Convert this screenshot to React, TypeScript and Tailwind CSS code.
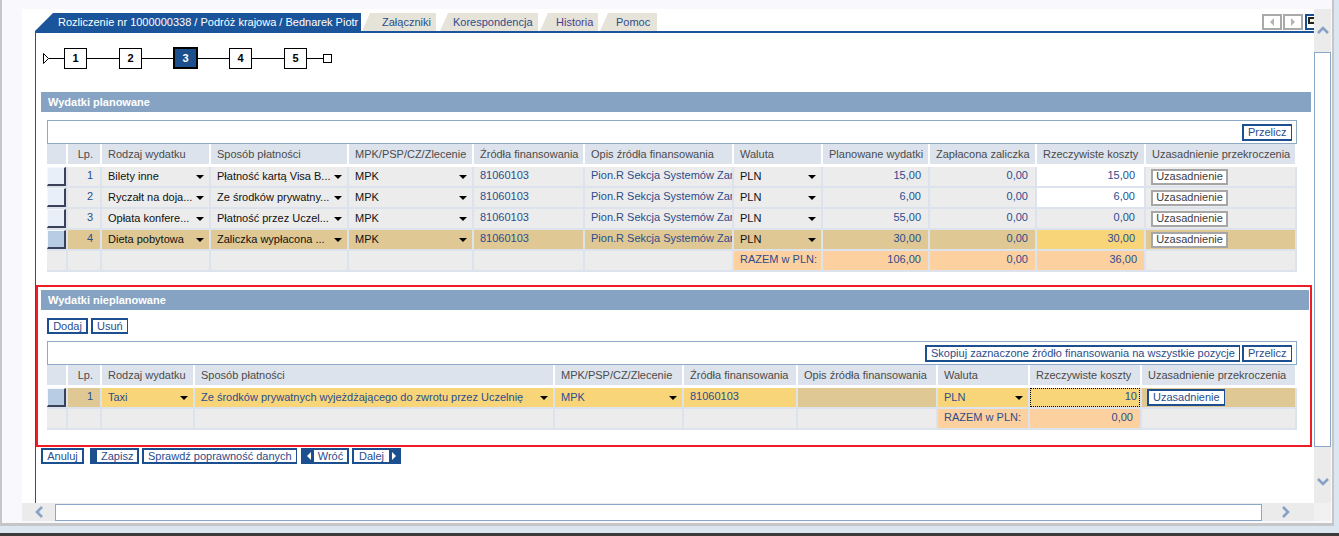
import React from 'react'

const FONT = "font-['Liberation_Sans',Arial,sans-serif]"

const PLANNED_W = ['w-[21px]', 'w-[34px]', 'w-[109px]', 'w-[138px]', 'w-[125px]', 'w-[111px]', 'w-[149px]', 'w-[89px]', 'w-[107px]', 'w-[107px]', 'w-[109px]', 'w-[151px]']
const UNPLANNED_W = ['w-[21px]', 'w-[34px]', 'w-[93px]', 'w-[360px]', 'w-[129px]', 'w-[114px]', 'w-[140px]', 'w-[92px]', 'w-[112px]', 'w-[155px]']

const GRAY = 'bg-[#ececec]'
const TAN = 'bg-[#e0c894]'
const YELLOW = 'bg-[#f9d57a]'
const PEACH = 'bg-[#fdd09f]'

// small black select arrow
function Arrow() {
  return <span className="block w-0 h-0 shrink-0 border-x-[4px] border-x-transparent border-t-[4px] border-t-black" />
}

function Cell({ w, bg = GRAY, className = '', children }: { w: string; bg?: string; className?: string; children?: React.ReactNode }) {
  return (
    <div className={`${w} ${bg} shrink-0 h-full border-r-2 border-[#dde3ec] overflow-hidden whitespace-nowrap flex items-center ${className}`}>
      {children}
    </div>
  )
}

function Txt({ w, bg, text, right }: { w: string; bg?: string; text: string; right?: boolean }) {
  return (
    <Cell w={w} bg={bg} className={`px-[6px] pb-[2px] text-[#2b4d8c] ${right ? 'justify-end pr-[7px]' : ''}`}>
      {text}
    </Cell>
  )
}

function Sel({ w, bg, text, blue }: { w: string; bg?: string; text: string; blue?: boolean }) {
  return (
    <Cell w={w} bg={bg} className={`pl-[6px] pr-[5px] justify-between ${blue ? 'text-[#2b4d8c]' : 'text-[#111]'}`}>
      <span>{text}</span>
      <Arrow />
    </Cell>
  )
}

function Check({ selected, empty }: { selected?: boolean; empty?: boolean }) {
  return (
    <Cell w="w-[21px]" bg={GRAY} className="items-stretch">
      {!empty && (
        <div
          className={`flex-1 border-l border-t border-[#f4f7fb] border-r-2 border-b-2 border-r-[#3b4158] border-b-[#3b4158] ${
            selected ? 'bg-[#b8cce4]' : 'bg-[#e9eff8]'
          }`}
        />
      )}
    </Cell>
  )
}

function Btn({ children, className = '', h = 'h-[17px]' }: { children: React.ReactNode; className?: string; h?: string }) {
  return (
    <div className={`${h} bg-[#1b4f8f] p-[2px] flex shrink-0 ${className}`}>
      <div className="flex-1 bg-white flex items-center justify-center px-[4px] text-[#2b4d8c] whitespace-nowrap">{children}</div>
    </div>
  )
}

function GrayBtn() {
  return (
    <div className="ml-[5px] h-[16px] w-[77px] border-2 border-[#a6a6a6] bg-white flex items-center justify-center text-[#3c3c3c]">
      Uzasadnienie
    </div>
  )
}

function Header({ widths, labels }: { widths: string[]; labels: string[] }) {
  return (
    <div className="flex h-[20px] bg-[#dde3ec] mb-[3px] text-[#4b4b4b]">
      {labels.map((l, i) => (
        <div
          key={i}
          className={`${widths[i]} shrink-0 h-full border-r-2 border-white flex items-center whitespace-nowrap overflow-hidden ${
            l === 'Lp.' ? 'justify-end pr-[7px]' : 'pl-[6px]'
          }`}
        >
          {l}
        </div>
      ))}
    </div>
  )
}

function Row({ children }: { children: React.ReactNode }) {
  return <div className="flex h-[21px] border-b-2 border-[#dde3ec]">{children}</div>
}

function Toolbar({ children }: { children?: React.ReactNode }) {
  return <div className="h-[24px] border border-[#8ea9c8] flex items-center justify-end gap-[2px] pr-[4px]">{children}</div>
}

function SectionHeader({ title, className = '' }: { title: string; className?: string }) {
  return (
    <div className={`h-[20px] bg-[#86a3c3] text-white font-bold pl-[7px] flex items-center shrink-0 ${className}`}>{title}</div>
  )
}

const plannedRows = [
  { lp: '1', rodzaj: 'Bilety inne', sposob: 'Płatność kartą Visa B...', plan: '15,00', rz: '15,00', rzBg: 'bg-white' },
  { lp: '2', rodzaj: 'Ryczałt na doja...', sposob: 'Ze środków prywatny...', plan: '6,00', rz: '6,00', rzBg: 'bg-white' },
  { lp: '3', rodzaj: 'Opłata konfere...', sposob: 'Płatność przez Uczel...', plan: '55,00', rz: '0,00', rzBg: GRAY },
  { lp: '4', rodzaj: 'Dieta pobytowa', sposob: 'Zaliczka wypłacona ...', plan: '30,00', rz: '30,00', rzBg: YELLOW, sel: true },
]

function PlannedTable() {
  const w = PLANNED_W
  return (
    <div className="ml-[11px] mt-[8px] w-[1250px]">
      <Toolbar>
        <Btn className="w-[50px]">Przelicz</Btn>
      </Toolbar>
      <Header
        widths={w}
        labels={['', 'Lp.', 'Rodzaj wydatku', 'Sposób płatności', 'MPK/PSP/CZ/Zlecenie', 'Źródła finansowania', 'Opis źródła finansowania', 'Waluta', 'Planowane wydatki', 'Zapłacona zaliczka', 'Rzeczywiste koszty', 'Uzasadnienie przekroczenia']}
      />
      {plannedRows.map((r) => {
        const bg = r.sel ? TAN : GRAY
        return (
          <Row key={r.lp}>
            <Check selected={r.sel} />
            <Txt w={w[1]} bg={bg} text={r.lp} right />
            <Sel w={w[2]} bg={bg} text={r.rodzaj} />
            <Sel w={w[3]} bg={bg} text={r.sposob} />
            <Sel w={w[4]} bg={bg} text="MPK" />
            <Txt w={w[5]} bg={bg} text="81060103" />
            <Txt w={w[6]} bg={bg} text="Pion.R Sekcja Systemów Zar" />
            <Sel w={w[7]} bg={bg} text="PLN" />
            <Txt w={w[8]} bg={bg} text={r.plan} right />
            <Txt w={w[9]} bg={bg} text="0,00" right />
            <Cell w={w[10]} bg={r.rzBg} className="justify-end pr-[9px] pb-[2px] text-[#2b4d8c]">
              {r.rz}
            </Cell>
            <Cell w={w[11]} bg={bg}>
              <GrayBtn />
            </Cell>
          </Row>
        )
      })}
      <Row>
        <Check empty />
        <Cell w={w[1]} />
        <Cell w={w[2]} />
        <Cell w={w[3]} />
        <Cell w={w[4]} />
        <Cell w={w[5]} />
        <Cell w={w[6]} />
        <Txt w={w[7]} bg={PEACH} text="RAZEM w PLN:" />
        <Txt w={w[8]} bg={PEACH} text="106,00" right />
        <Txt w={w[9]} bg={PEACH} text="0,00" right />
        <Txt w={w[10]} bg={PEACH} text="36,00" right />
        <Cell w={w[11]} />
      </Row>
    </div>
  )
}

function UnplannedTable() {
  const w = UNPLANNED_W
  return (
    <div className="ml-[6px] mt-[7px] w-[1250px]">
      <Toolbar>
        <Btn className="w-[315px]">Skopiuj zaznaczone źródło finansowania na wszystkie pozycje</Btn>
        <Btn className="w-[50px]">Przelicz</Btn>
      </Toolbar>
      <Header
        widths={w}
        labels={['', 'Lp.', 'Rodzaj wydatku', 'Sposób płatności', 'MPK/PSP/CZ/Zlecenie', 'Źródła finansowania', 'Opis źródła finansowania', 'Waluta', 'Rzeczywiste koszty', 'Uzasadnienie przekroczenia']}
      />
      <Row>
        <Check selected />
        <Txt w={w[1]} bg={TAN} text="1" right />
        <Sel w={w[2]} bg={YELLOW} text="Taxi" blue />
        <Sel w={w[3]} bg={YELLOW} text="Ze środków prywatnych wyjeżdżającego do zwrotu przez Uczelnię" blue />
        <Sel w={w[4]} bg={YELLOW} text="MPK" blue />
        <Txt w={w[5]} bg={YELLOW} text="81060103" />
        <Cell w={w[6]} bg={TAN} />
        <Sel w={w[7]} bg={YELLOW} text="PLN" blue />
        <Cell w={w[8]} bg={YELLOW} className="items-stretch">
          <div className="flex-1 border border-dotted border-black flex items-center justify-end pr-[2px] pb-[2px] text-[#2b4d8c]">10</div>
        </Cell>
        <Cell w={w[9]} bg={TAN}>
          <Btn className="ml-[5px] w-[78px]">Uzasadnienie</Btn>
        </Cell>
      </Row>
      <Row>
        <Check empty />
        <Cell w={w[1]} />
        <Cell w={w[2]} />
        <Cell w={w[3]} />
        <Cell w={w[4]} />
        <Cell w={w[5]} />
        <Cell w={w[6]} />
        <Txt w={w[7]} bg={PEACH} text="RAZEM w PLN:" />
        <Txt w={w[8]} bg={PEACH} text="0,00" right />
        <Cell w={w[9]} />
      </Row>
    </div>
  )
}

function StepBox({ n, active }: { n: number; active?: boolean }) {
  return active ? (
    <div className="w-[25px] h-[22px] border-2 border-black bg-[#1b4f8e] text-white font-bold flex items-center justify-center shrink-0">{n}</div>
  ) : (
    <div className="w-[23px] h-[21px] border border-black bg-white text-black font-bold flex items-center justify-center shrink-0">{n}</div>
  )
}

function Line({ w }: { w: string }) {
  return <div className={`${w} h-px bg-black shrink-0`} />
}

function Stepper() {
  return (
    <div className="ml-[7px] mt-[14px] h-[22px] flex items-center">
      <svg width="6" height="11" viewBox="0 0 6 11" className="shrink-0">
        <polygon points="0.5,0.5 5.5,5.5 0.5,10.5" fill="white" stroke="black" strokeWidth="1" />
      </svg>
      <Line w="w-[15px]" />
      <StepBox n={1} />
      <Line w="w-[32px]" />
      <StepBox n={2} />
      <Line w="w-[31px]" />
      <StepBox n={3} active />
      <Line w="w-[31px]" />
      <StepBox n={4} />
      <Line w="w-[32px]" />
      <StepBox n={5} />
      <Line w="w-[16px]" />
      <div className="w-[9px] h-[9px] border border-black bg-white shrink-0" />
    </div>
  )
}

function Tabs() {
  const tab = 'h-[18px] bg-[#e6e4d9] text-[#2b4d8c] flex items-center shrink-0 [clip-path:polygon(8px_0,100%_0,100%_100%,0_100%)]'
  return (
    <div className="w-[1290px] h-[20px] border-b-2 border-[#1a559b] flex items-end">
      <div className="w-[326px] h-[18px] bg-[#1a559b] text-white pl-[23px] flex items-center shrink-0 [clip-path:polygon(18px_0,100%_0,100%_100%,0_100%)]">
        Rozliczenie nr 1000000338 / Podróż krajowa / Bednarek Piotr
      </div>
      <div className={`${tab} ml-[1px] w-[74px] pl-[20px]`}>Załączniki</div>
      <div className={`${tab} ml-[4px] w-[98px] pl-[13px]`}>Korespondencja</div>
      <div className={`${tab} ml-[2px] w-[58px] pl-[16px] text-[#4a3f8c]`}>Historia</div>
      <div className={`${tab} ml-[2px] w-[57px] pl-[16px]`}>Pomoc</div>
      <div className="ml-auto self-start mt-[1px] flex gap-[1px]">
        <div className="w-[20px] h-[16px] border-2 border-[#a9a9a9] bg-white flex items-center justify-center">
          <span className="block w-0 h-0 border-y-[4px] border-y-transparent border-r-[4px] border-r-[#b4b4b4]" />
        </div>
        <div className="w-[20px] h-[16px] border-2 border-[#a9a9a9] bg-white flex items-center justify-center">
          <span className="block w-0 h-0 border-y-[4px] border-y-transparent border-l-[4px] border-l-[#b4b4b4]" />
        </div>
        <div className="ml-[1px] w-[20px] h-[16px] border-2 border-[#1b4f8f] bg-white pl-[1px] pt-[1px]">
          <div className="w-[10px] h-[7px] border-2 border-[#222] bg-[#f1f0d6]" />
        </div>
      </div>
    </div>
  )
}

function Chevron({ dir }: { dir: 'up' | 'down' | 'left' | 'right' }) {
  const pts = {
    up: '1,8 6,3 11,8',
    down: '1,3 6,8 11,3',
    left: '8,1 3,6 8,11',
    right: '3,1 8,6 3,11',
  }[dir]
  return (
    <svg width="12" height="12" viewBox="0 0 12 12" className="shrink-0">
      <polyline points={pts} fill="none" stroke="#87a2c4" strokeWidth="2.6" />
    </svg>
  )
}

function VScroll() {
  return (
    <div className="w-[17px] h-full bg-[#ebebeb] flex flex-col items-center shrink-0">
      <div className="h-[43px] flex items-start pt-[16px]">
        <Chevron dir="up" />
      </div>
      <div className="w-[17px] h-[395px] border border-[#8aa6c8] bg-white" />
      <div className="flex-1 flex items-start pt-[29px]">
        <Chevron dir="down" />
      </div>
    </div>
  )
}

function HScroll() {
  return (
    <div className="h-[18px] flex shrink-0">
      <div className="w-[1292px] bg-[#ebebeb] flex items-center">
        <div className="w-[33px] flex justify-center pl-[2px]">
          <Chevron dir="left" />
        </div>
        <div className="w-[1207px] h-[17px] self-end border border-[#8aa6c8] bg-white" />
        <div className="flex-1 flex justify-center pr-[4px]">
          <Chevron dir="right" />
        </div>
      </div>
      <div className="w-[17px] bg-[#f1f1f1]" />
    </div>
  )
}

function BottomButtons() {
  return (
    <div className="ml-[5px] mt-[1px] flex h-[16px]">
      <Btn h="h-[16px]" className="w-[43px]">Anuluj</Btn>
      <Btn h="h-[16px]" className="ml-[6px] w-[49px] pl-[7px]">Zapisz</Btn>
      <Btn h="h-[16px]" className="ml-[3px] w-[155px]">Sprawdź poprawność danych</Btn>
      <div className="ml-[4px] w-[48px] h-[16px] bg-[#1b4f8f] p-[2px] flex items-center">
        <div className="w-[11px] flex justify-center">
          <span className="block w-0 h-0 border-y-[4px] border-y-transparent border-r-[4px] border-r-white" />
        </div>
        <div className="flex-1 h-full bg-white flex items-center justify-center text-[#2b4d8c]">Wróć</div>
      </div>
      <div className="ml-[3px] w-[49px] h-[16px] bg-[#1b4f8f] p-[2px] flex items-center">
        <div className="flex-1 h-full bg-white flex items-center justify-center text-[#2b4d8c]">Dalej</div>
        <div className="w-[10px] flex justify-center">
          <span className="block w-0 h-0 border-y-[4px] border-y-transparent border-l-[4px] border-l-white" />
        </div>
      </div>
    </div>
  )
}

function Content() {
  return (
    <div className="pl-[13px] pt-[4px] w-[1310px]">
      <Tabs />
      <div className="border-l border-[#1a559b] flex flex-col items-start pb-[60px]">
        <Stepper />
        <SectionHeader title="Wydatki planowane" className="mt-[23px] ml-[5px] w-[1270px]" />
        <PlannedTable />
        {/* highlighted section */}
        <div className="mt-[13px] w-[1276px] border-2 border-[#ee1c25] pl-[3px] pr-[1px] pt-[3px] pb-[15px]">
          <SectionHeader title="Wydatki nieplanowane" className="w-[1268px]" />
          <div className="ml-[6px] mt-[8px] flex gap-[3px]">
            <Btn h="h-[16px]" className="w-[41px]">Dodaj</Btn>
            <Btn h="h-[16px]" className="w-[37px]">Usuń</Btn>
          </div>
          <UnplannedTable />
        </div>
        <BottomButtons />
      </div>
    </div>
  )
}

export default function App() {
  return (
    <div className={`w-[1339px] h-[536px] overflow-hidden bg-[#dce6f1] ${FONT} text-[11px] leading-none flex flex-col`}>
      <div className="w-[1334px] h-[526px] shrink-0 border-l-2 border-r-2 border-b-[3px] border-[#c6c6c6] bg-[#f9f9fd] flex flex-col">
        <div className="h-[9px] shrink-0" />
        <div className="flex pl-[20px]">
          <div className="w-[1309px] h-[512px] flex flex-col">
            <div className="flex h-[494px]">
              <div className="w-[1292px] h-full bg-white overflow-hidden">
                <Content />
              </div>
              <VScroll />
            </div>
            <HScroll />
          </div>
        </div>
      </div>
      <div className="flex-1" />
      <div className="h-[3px] bg-[#3c3c3c] shrink-0" />
    </div>
  )
}
